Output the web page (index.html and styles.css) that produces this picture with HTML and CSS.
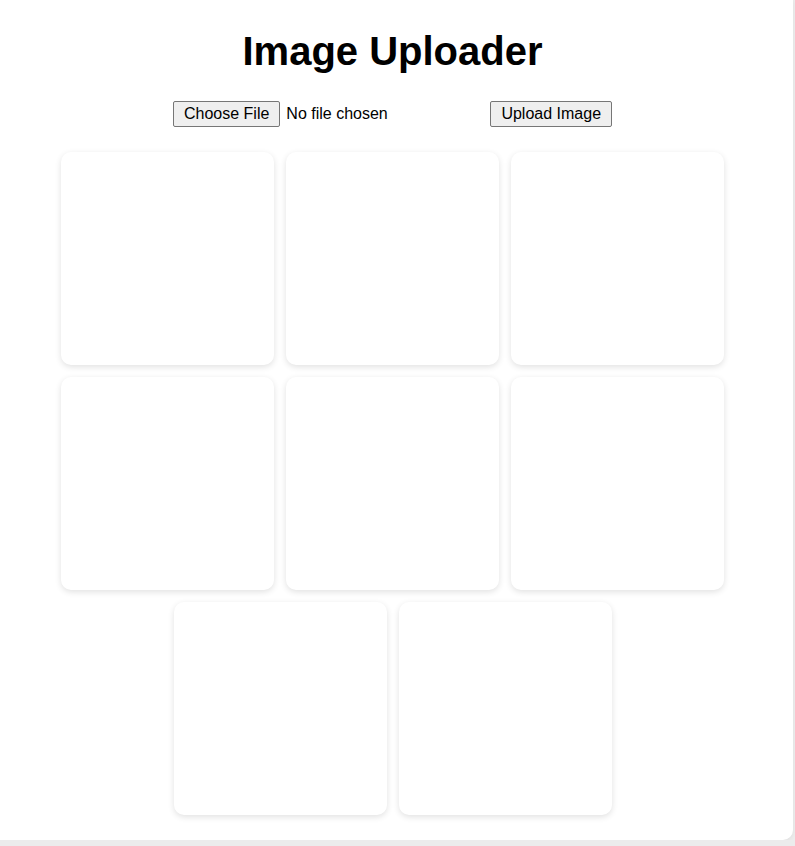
FILE: index.html
```html
<!DOCTYPE html>
<html lang="en">
<head>
<meta charset="utf-8">
<title>Image Uploader</title>
<link rel="stylesheet" href="styles.css">
</head>
<body>
<div class="container">
  <h1 class="title">Image Uploader</h1>
  <form class="upload-form">
    <input class="file-input" type="file" accept="image/*">
    <button class="upload-btn" type="button">Upload Image</button>
  </form>
  <div class="gallery">
    <div class="card"></div>
    <div class="card"></div>
    <div class="card"></div>
    <div class="card"></div>
    <div class="card"></div>
    <div class="card"></div>
    <div class="card"></div>
    <div class="card"></div>
  </div>
</div>
</body>
</html>
```

FILE: styles.css
```css
html, body {
  margin: 0;
  padding: 0;
}

body {
  background: #ececec;
  font-family: "Liberation Sans", Arial, sans-serif;
  color: #000;
}

.container {
  box-sizing: border-box;
  width: 793px;
  height: 840px;
  background: #fff;
  border-radius: 0 0 10px 0;
  padding: 28px 8px 0 0;
  box-shadow: 0 1px 4px rgba(0, 0, 0, 0.06);
}

.title {
  margin: 0;
  text-align: center;
  font-size: 40px;
  font-weight: bold;
  line-height: 46px;
}

.upload-form {
  margin-top: 27px;
  text-align: center;
  font-size: 16px;
}

.file-input {
  font-family: "Liberation Sans", Arial, sans-serif;
  font-size: 16px;
  margin-right: 10px;
}

.file-input::file-selector-button,
.upload-btn {
  font-family: "Liberation Sans", Arial, sans-serif;
  font-size: 16px;
  color: #000;
  background: #efefef;
  border: 1px solid #767676;
  border-radius: 2px;
  padding: 3px 10px;
}

.file-input::file-selector-button {
  margin-right: 6px;
}

.upload-btn {
  margin: 0;
}

.gallery {
  display: flex;
  flex-wrap: wrap;
  justify-content: center;
  gap: 12px;
  width: 675px;
  margin: 25px auto 0;
}

.card {
  width: 213px;
  height: 213px;
  background: #fff;
  border-radius: 10px;
  box-shadow: 0 2px 6px rgba(0, 0, 0, 0.12);
}
```
